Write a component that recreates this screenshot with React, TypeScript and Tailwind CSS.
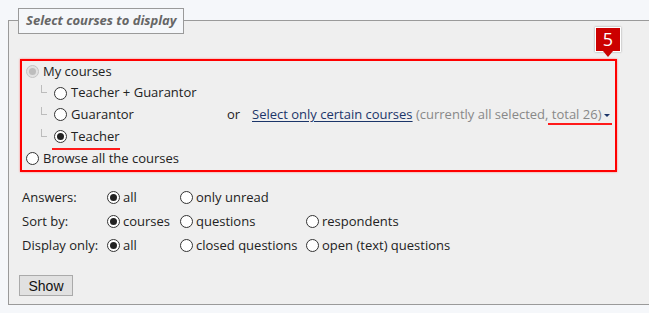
import type { ReactNode } from 'react'

interface RadioProps {
  checked?: boolean
  disabled?: boolean
}

function Radio({ checked, disabled }: RadioProps) {
  if (disabled) {
    return (
      <span className="flex h-[13px] w-[13px] shrink-0 items-center justify-center rounded-full border border-[#c4c4c4] bg-[#e2e2e2]">
        <span className="h-[7px] w-[7px] rounded-full bg-[#bdbdbd]" />
      </span>
    )
  }
  return (
    <span className="flex h-[13px] w-[13px] shrink-0 items-center justify-center rounded-full border border-[#333] bg-white">
      {checked && <span className="h-[7px] w-[7px] rounded-full bg-[#222]" />}
    </span>
  )
}

function Option({ checked, children }: { checked?: boolean; children: ReactNode }) {
  return (
    <span className="flex items-center gap-[3px]">
      <Radio checked={checked} />
      <span>{children}</span>
    </span>
  )
}

function Branch() {
  return (
    <span className="flex h-full w-[13px] shrink-0 items-start">
      <span className="mt-[3px] h-[8px] w-[6px] border-b border-l border-[#bcbcbc]" />
    </span>
  )
}

function TreeRow({ children }: { children: ReactNode }) {
  return <div className="flex h-[21.75px] items-center">{children}</div>
}

export default function App() {
  return (
    <div
      className="h-[313px] w-[649px] overflow-hidden bg-[#f5f7fa] pt-[8px] text-[13px] text-[#222]"
      style={{ fontFamily: '"Open Sans", "Noto Sans", sans-serif' }}
    >
      <fieldset className="ml-[8px] w-[670px] border border-[#9a9a9a] bg-[#efefef] pb-[8px] pl-[9px]">
        <legend className="border border-[#9a9a9a] bg-[#f5f7fa] px-[7px] py-[2px] text-[13px] font-bold italic text-[#666]">
          Select courses to display
        </legend>

        <div className="relative ml-[2px] mt-[25px] w-[597px] border-2 border-[#ff0000] pb-[1px] pl-[4px] shadow-[0_0_2px_#ff8080]">
          <div className="absolute right-[-6px] top-[-34px] flex flex-col items-center">
            <div className="flex h-[25px] w-[26px] items-center justify-center border border-white bg-[#cc0000] text-[18px] leading-none text-white shadow-[0_0_2px_#999]">
              5
            </div>
            <div className="-mt-[1px] h-0 w-0 border-x-[5px] border-t-[6px] border-x-transparent border-t-[#cc0000]" />
          </div>

          <TreeRow>
            <span className="flex items-center gap-[4px]">
              <Radio disabled />
              <span>My courses</span>
            </span>
          </TreeRow>

          <TreeRow>
            <span className="flex h-full items-center pl-[15px]">
              <Branch />
              <span className="flex items-center gap-[4px]">
                <Radio />
                <span>Teacher + Guarantor</span>
              </span>
            </span>
          </TreeRow>

          <TreeRow>
            <span className="flex h-full w-[201px] shrink-0 items-center pl-[15px]">
              <Branch />
              <span className="flex items-center gap-[4px]">
                <Radio />
                <span>Guarantor</span>
              </span>
            </span>
            <span className="w-[25px] shrink-0">or</span>
            <span className="whitespace-nowrap">
              <a href="#" className="text-[#1b3569] underline underline-offset-2">
                Select only certain courses
              </a>
              <span className="text-[#888]"> (currently all selected, </span>
              <span className="relative text-[#888]">
                total 26)
                <span className="ml-[3px] inline-block h-0 w-0 border-x-[3px] border-t-[3px] border-x-transparent border-t-[#1b3569] align-middle" />
                <span className="absolute bottom-[-2px] left-[-4px] right-[-2px] h-[2px] bg-[#ff1a1a]" />
              </span>
            </span>
          </TreeRow>

          <TreeRow>
            <span className="flex h-full items-center pl-[15px]">
              <Branch />
              <span className="relative flex items-center gap-[4px]">
                <Radio checked />
                <span>Teacher</span>
                <span className="absolute bottom-[-4px] left-[-2px] right-0 h-[2px] bg-[#ff1a1a]" />
              </span>
            </span>
          </TreeRow>

          <TreeRow>
            <span className="flex items-center gap-[4px]">
              <Radio />
              <span>Browse all the courses</span>
            </span>
          </TreeRow>
        </div>

        <div className="ml-[4px] mt-[13px] grid grid-cols-[85px_73px_126px_1fr] text-[#222]">
          <div className="flex h-[24px] items-center">Answers:</div>
          <div className="flex h-[24px] items-center"><Option checked>all</Option></div>
          <div className="flex h-[24px] items-center"><Option>only unread</Option></div>
          <div className="h-[24px]" />

          <div className="flex h-[24px] items-center">Sort by:</div>
          <div className="flex h-[24px] items-center"><Option checked>courses</Option></div>
          <div className="flex h-[24px] items-center"><Option>questions</Option></div>
          <div className="flex h-[24px] items-center"><Option>respondents</Option></div>

          <div className="flex h-[24px] items-center">Display only:</div>
          <div className="flex h-[24px] items-center"><Option checked>all</Option></div>
          <div className="flex h-[24px] items-center"><Option>closed questions</Option></div>
          <div className="flex h-[24px] items-center"><Option>open (text) questions</Option></div>
        </div>

        <button
          className="ml-[1px] mt-[18px] h-[21px] w-[54px] border border-[#aaa] bg-[#e1e1e1] text-[14px] leading-none text-[#111]"
          style={{ fontFamily: '"Liberation Sans", Arial, sans-serif' }}
        >
          Show
        </button>
      </fieldset>
    </div>
  )
}
